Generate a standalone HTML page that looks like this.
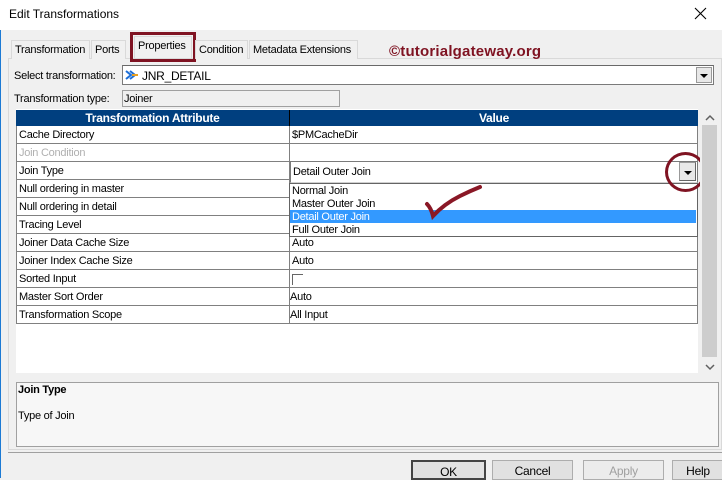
<!DOCTYPE html>
<html><head><meta charset="utf-8"><style>
*{box-sizing:border-box;margin:0;padding:0}
body{width:722px;height:478px;overflow:hidden;background:#f0f0f0;font-family:"Liberation Sans",Arial,sans-serif;font-size:11px;letter-spacing:-0.25px;color:#000;position:relative}
.a{position:absolute}
.title{left:0;top:0;width:722px;height:30px;background:#fff}
.title span{position:absolute;left:9px;top:7px;font-size:12px;letter-spacing:0}
.tab{top:40px;height:19px;border:1px solid #d9d9d9;border-bottom:none;background:#f0f0f0;padding:3px 3px 0;white-space:nowrap}
.row{left:16px;width:682px;height:18px;border-bottom:1px solid #808080;background:#fff}
.row .c1{position:absolute;left:3px;top:3px}
.row .c2{position:absolute;left:273px;top:0;width:1px;height:18px;background:#808080}
.row .v{position:absolute;left:276px;top:3px}
.btn{top:460px;height:20px;border:1px solid #adadad;background:#e1e1e1;text-align:center;padding-top:3px;font-size:12px}
</style></head><body>
<div class="a" style="left:0;top:0;width:1px;height:478px;background:#1c7ad4"></div>
<div class="a title"><span>Edit Transformations</span>
<svg class="a" style="left:694px;top:7px" width="14" height="14"><path d="M1 1L12 12M12 1L1 12" stroke="#000" stroke-width="1.1"/></svg></div>
<div class="a" style="left:8px;top:58px;width:714px;height:392px;border:1px solid #d9d9d9;background:#f0f0f0"></div>
<div class="a tab" style="left:11px;width:79px">Transformation</div>
<div class="a tab" style="left:91px;width:35px">Ports</div>
<div class="a tab" style="left:134px;top:36px;height:22px;width:58px;background:#f0f0f0;border-color:#d9d9d9">Properties</div>
<div class="a" style="left:130px;top:32px;width:66px;height:30px;border:3px solid #7f1322"></div>
<div class="a tab" style="left:195px;width:53px">Condition</div>
<div class="a tab" style="left:249px;width:109px">Metadata Extensions</div>
<div class="a" style="left:389px;top:43px;font-size:15px;letter-spacing:0.2px;font-weight:bold;color:#7f1322">©tutorialgateway.org</div>
<div class="a" style="left:14px;top:70px">Select transformation:</div>
<div class="a" style="left:122px;top:65px;width:592px;height:20px;border:1px solid #7a7a7a;border-top-color:#696969;background:#fff"></div>
<svg class="a" style="left:125px;top:69px" width="14" height="12"><path d="M1 2L6 6L1 10M5 2L10 6L5 10" stroke="#1e6fd8" stroke-width="2" fill="none"/><path d="M7 6h6" stroke="#e8a020" stroke-width="2"/></svg>
<div class="a" style="left:142px;top:69px;font-size:12px">JNR_DETAIL</div>
<div class="a" style="left:696px;top:67px;width:16px;height:16px;background:#e8e8e8;border:1px solid #999"></div>
<div class="a" style="left:700px;top:74px;border:4px solid transparent;border-top:4px solid #000;border-bottom:none"></div>
<div class="a" style="left:14px;top:93px">Transformation type:</div>
<div class="a" style="left:122px;top:90px;width:218px;height:17px;border:1px solid #a0a0a0;background:#f0f0f0;padding:2px 1px">Joiner</div>
<div class="a" style="left:16px;top:109px;width:682px;height:264px;background:#fff"></div>
<div class="a" style="left:16px;top:110px;width:682px;height:17px;background:#003f7f;border-bottom:1px solid #000;color:#fff;font-weight:bold;font-size:12px">
<div class="a" style="left:0;width:273px;text-align:center;top:1px">Transformation Attribute</div>
<div class="a" style="left:273px;top:0;width:1px;height:17px;background:#000"></div>
<div class="a" style="left:274px;width:408px;text-align:center;top:1px">Value</div></div>
<div class="a row" style="top:126px"><span class="c1">Cache Directory</span><i class="c2"></i><span class="v">$PMCacheDir</span></div>
<div class="a row" style="top:144px"><span class="c1" style="color:#b0b0b0">Join Condition</span><i class="c2"></i></div>
<div class="a row" style="top:162px"><span class="c1">Join Type</span><i class="c2"></i></div>
<div class="a row" style="top:180px"><span class="c1">Null ordering in master</span><i class="c2"></i></div>
<div class="a row" style="top:198px"><span class="c1">Null ordering in detail</span><i class="c2"></i></div>
<div class="a row" style="top:216px"><span class="c1">Tracing Level</span><i class="c2"></i></div>
<div class="a row" style="top:234px"><span class="c1">Joiner Data Cache Size</span><i class="c2"></i><span class="v">Auto</span></div>
<div class="a row" style="top:252px"><span class="c1">Joiner Index Cache Size</span><i class="c2"></i><span class="v">Auto</span></div>
<div class="a row" style="top:270px"><span class="c1">Sorted Input</span><i class="c2"></i><span class="a" style="left:276px;top:4px;width:11px;height:11px;border-left:1px solid #666;border-top:1px solid #666"></span></div>
<div class="a row" style="top:288px"><span class="c1">Master Sort Order</span><i class="c2"></i><span class="v" style="left:274px">Auto</span></div>
<div class="a row" style="top:306px"><span class="c1">Transformation Scope</span><i class="c2"></i><span class="v" style="left:274px">All Input</span></div>
<div class="a" style="left:16px;top:126px;width:1px;height:198px;background:#808080"></div>
<div class="a" style="left:697px;top:126px;width:1px;height:198px;background:#808080"></div>
<div class="a" style="left:290px;top:161px;width:408px;height:22px;border:1px solid #7a7a7a;border-bottom-color:#d0d0d0;background:#fff"></div>
<div class="a" style="left:293px;top:166px">Detail Outer Join</div>
<div class="a" style="left:679px;top:162px;width:17px;height:19px;background:#e8e8e8;border:1px solid #999;border-right-color:#666;border-bottom-color:#666"></div>
<div class="a" style="left:684px;top:171px;border:4px solid transparent;border-top:4px solid #000;border-bottom:none"></div>
<div class="a" style="left:289px;top:183px;width:409px;height:54px;border:1px solid #646464;background:#fff"></div>
<div class="a" style="left:292px;top:185px">Normal Join</div>
<div class="a" style="left:292px;top:198px">Master Outer Join</div>
<div class="a" style="left:290px;top:210px;width:406px;height:13px;background:#3399ff"></div>
<div class="a" style="left:292px;top:211px;color:#fff">Detail Outer Join</div>
<div class="a" style="left:292px;top:224px">Full Outer Join</div>
<div class="a" style="left:665px;top:152px;width:41px;height:40px;border:3px solid #7f1322;border-radius:50%"></div>
<svg class="a" style="left:420px;top:182px" width="70" height="40"><path d="M7 22Q11 26 13 34Q24 22 40 14Q50 9 60 5" stroke="#8a1826" stroke-width="4" fill="none" stroke-linecap="round"/></svg>
<div class="a" style="left:700px;top:109px;width:19px;height:266px;background:#f0f0f0"></div>
<div class="a" style="left:702px;top:125px;width:15px;height:232px;background:#cdcdcd"></div>
<svg class="a" style="left:705px;top:114px" width="10" height="8"><path d="M1 6L5 2L9 6" stroke="#606060" stroke-width="1.5" fill="none"/></svg>
<svg class="a" style="left:705px;top:363px" width="10" height="8"><path d="M1 2L5 6L9 2" stroke="#606060" stroke-width="1.5" fill="none"/></svg>
<div class="a" style="left:16px;top:382px;width:703px;height:65px;border:1px solid #a0a0a0;background:#f7f7f7"></div>
<div class="a" style="left:18px;top:384px;font-weight:bold;font-size:11px">Join Type</div>
<div class="a" style="left:18px;top:410px">Type of Join</div>
<div class="a" style="left:8px;top:452px;width:714px;height:1px;background:#a0a0a0"></div>
<div class="a btn" style="left:411px;width:75px;border:2px solid #444">OK</div>
<div class="a btn" style="left:492px;width:81px">Cancel</div>
<div class="a btn" style="left:583px;width:81px;color:#a0a0a0;background:#ececec">Apply</div>
<div class="a btn" style="left:672px;width:52px">Help</div>
</body></html>
